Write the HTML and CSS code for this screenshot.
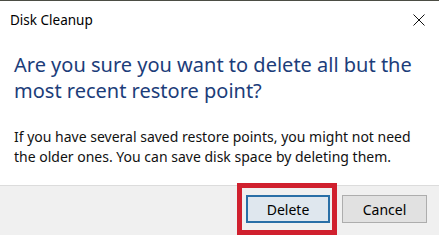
FILE: index.html
```html
<!DOCTYPE html>
<html>
<head>
<meta charset="utf-8">
<link rel="stylesheet" href="styles.css">
</head>
<body>
<div class="dialog">
  <div class="titlebar">
    <span class="title">Disk Cleanup</span>
    <svg class="close" width="12" height="12" viewBox="0 0 12 12"><path d="M0.5 0.5 L11.5 11.5 M11.5 0.5 L0.5 11.5" stroke="#111" stroke-width="1" fill="none"/></svg>
  </div>
  <div class="content">
    <h1 class="heading">Are you sure you want to delete all but the most recent restore point?</h1>
    <p class="body">If you have several saved restore points, you might not need the older ones. You can save disk space by deleting them.</p>
  </div>
  <div class="footer">
    <div class="btn-wrap">
      <button class="btn btn-default">Delete</button>
      <span class="highlight"></span>
    </div>
    <button class="btn">Cancel</button>
  </div>
</div>
</body>
</html>
```
FILE: styles.css
```css
html, body {
  margin: 0;
  padding: 0;
  background: #ffffff;
}
.dialog {
  width: 439px;
  height: 235px;
  box-sizing: border-box;
  border-top: 1px solid #4b4d44;
  display: flex;
  flex-direction: column;
  overflow: hidden;
  font-family: "Noto Sans", "Open Sans", sans-serif;
  color: #000;
}
.titlebar {
  display: flex;
  justify-content: space-between;
  align-items: flex-start;
  padding: 10px 14px 0 10px;
  height: 32px;
  box-sizing: border-box;
}
.title {
  font-size: 13.5px;
  line-height: 18px;
}
.close {
  margin-top: 3px;
  display: block;
}
.content {
  padding: 0 14px;
  flex: 1;
}
.heading {
  margin: 19px 0 0 0;
  font-weight: normal;
  font-size: 20px;
  line-height: 26px;
  color: #1c3d7a;
}
.body {
  margin: 23px 0 0 0;
  font-size: 14px;
  line-height: 20px;
  color: #111;
}
.footer {
  height: 50px;
  box-sizing: border-box;
  background: #f0f0f0;
  border-top: 1px solid #dcdcdc;
  display: flex;
  justify-content: flex-end;
  align-items: flex-start;
  gap: 12px;
  padding: 9px 12px 0 0;
}
.btn-wrap {
  position: relative;
}
.btn {
  display: block;
  height: 28px;
  width: 85px;
  box-sizing: border-box;
  background: #e1e1e1;
  border: 1px solid #adadad;
  font-family: "Noto Sans", "Open Sans", sans-serif;
  font-size: 14px;
  color: #000;
  padding: 0;
  margin: 0;
}
.btn-default {
  width: 84px;
  border: 2px solid #2a6fa6;
  background: #dfe7ee;
}
.highlight {
  position: absolute;
  left: -9px;
  right: -7px;
  top: -12px;
  bottom: -12px;
  border: 5px solid #d0202e;
  pointer-events: none;
}
```
